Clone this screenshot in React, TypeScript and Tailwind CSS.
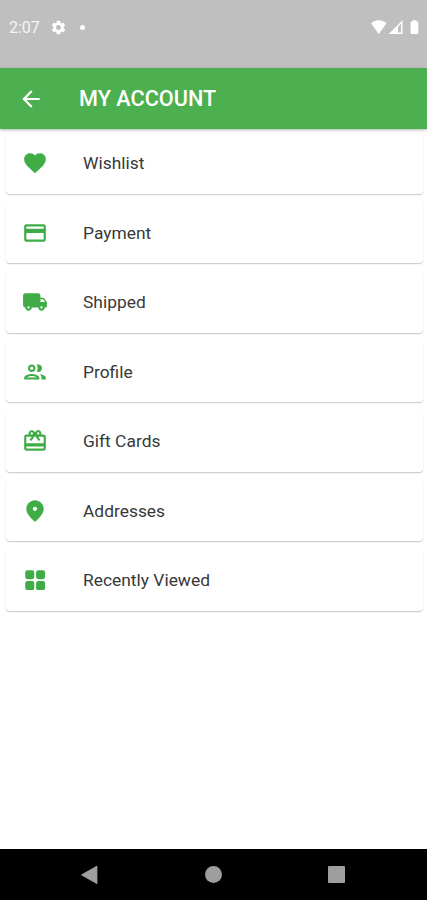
import type { ReactNode } from 'react';
import {
  MdArrowBack,
  MdCardGiftcard,
  MdFavorite,
  MdOutlinePeople,
  MdPayment,
  MdSettings,
} from 'react-icons/md';

type Item = {
  label: string;
  icon: ReactNode;
};

const items: Item[] = [
  { label: 'Wishlist', icon: <MdFavorite className="size-[26px]" /> },
  { label: 'Payment', icon: <MdPayment className="size-[26px]" /> },
  { label: 'Shipped', icon: <TruckIcon /> },
  { label: 'Profile', icon: <MdOutlinePeople className="size-[26px]" /> },
  { label: 'Gift Cards', icon: <MdCardGiftcard className="size-[26px]" /> },
  { label: 'Addresses', icon: <PinIcon /> },
  { label: 'Recently Viewed', icon: <GridIcon /> },
];

export default function App() {
  return (
    <div className="flex h-[900px] w-[427px] flex-col overflow-hidden bg-white font-[Roboto,sans-serif]">
      <StatusBar />
      <header className="z-10 flex h-[61px] shrink-0 items-center bg-[#4caf50] pl-[18px] text-white shadow-[0_1px_3px_rgba(0,0,0,0.3)]">
        <MdArrowBack className="size-[26px]" />
        <h1 className="ml-[35px] whitespace-nowrap pt-px font-medium text-[21.7px] leading-none">
          MY ACCOUNT
        </h1>
      </header>
      <main className="flex grow flex-col gap-[8.7px] pt-[4px] pr-[4px] pl-[5.5px]">
        {items.map((item) => (
          <MenuCard item={item} key={item.label} />
        ))}
      </main>
      <NavBar />
    </div>
  );
}

function MenuCard({ item }: { item: Item }) {
  return (
    <button className="flex h-[60.8px] shrink-0 items-center rounded-[4px] bg-white pl-[16.5px] text-left shadow-[0_1px_1px_rgba(0,0,0,0.16),0_1px_2px_rgba(0,0,0,0.08)]">
      <span className="text-[#3fac46]">{item.icon}</span>
      <span className="ml-[35px] pt-px text-[#383838] text-[17.4px] leading-none">
        {item.label}
      </span>
    </button>
  );
}

function StatusBar() {
  return (
    <div className="flex h-[68px] shrink-0 items-start bg-[#bfbfbf] pt-[18px] pr-[8px] pl-[9px] text-white">
      <span className="w-[33px] pt-px text-[16px] text-white/85 leading-[18px]">
        2:07
      </span>
      <MdSettings className="mt-px ml-[8px] size-[17px]" />
      <span className="mt-[7px] ml-[13px] size-[5px] rounded-full bg-white" />
      <svg
        className="mt-[2px] ml-auto h-[15px] w-[48px]"
        fill="currentColor"
        viewBox="0 0 48 15"
      >
        <path d="M0 3.2C4.5-.8 11-.8 15.500 3.200L7.750 14Z" />
        <path
          d="M31.500 .3V14H17.700ZM30 3.800 27 7v5.600h3Z"
          fillRule="evenodd"
        />
        <path d="M41.500.2h4v1.200h.9q1 0 1 1V13q0 1-1 1h-5.800q-1 0-1-1V2.400q0-1 1-1h.9Z" />
      </svg>
    </div>
  );
}

function NavBar() {
  return (
    <nav className="flex h-[51px] shrink-0 items-center justify-between bg-black pr-[82px] pl-[81px] text-[#9e9e9e]">
      <svg className="h-[20px] w-[17px]" fill="currentColor" viewBox="0 0 17 20">
        <path d="M.8 9.300 15.400.9q1-.5 1 .6v16.800q0 1-1 .5L.8 10.600q-.9-.6 0-1.300Z" />
      </svg>
      <span className="size-[17px] rounded-full bg-[#9e9e9e]" />
      <span className="size-[17px] rounded-[1px] bg-[#9e9e9e]" />
    </nav>
  );
}

function TruckIcon() {
  return (
    <svg className="size-[26px]" fill="currentColor" viewBox="0 0 24 24">
      <path d="M19.500 8H17V6c0-1.100-.9-2-2-2H3c-1.100 0-2 .9-2 2v9c0 1.100.9 2 2 2 0 1.660 1.340 3 3 3s3-1.340 3-3h6c0 1.660 1.340 3 3 3s3-1.340 3-3h1c.55 0 1-.45 1-1v-3.330c0-.43-.14-.85-.4-1.200L20.300 8.400c-.19-.25-.49-.4-.8-.4zM6 18c-.55 0-1-.45-1-1s.45-1 1-1 1 .45 1 1-.45 1-1 1zm13.500-8.500 1.960 2.500H17V9.500h2.500zM18 18c-.55 0-1-.45-1-1s.45-1 1-1 1 .45 1 1-.45 1-1 1z" />
    </svg>
  );
}

function PinIcon() {
  return (
    <svg className="size-[26px]" fill="currentColor" viewBox="0 0 24 24">
      <path d="M12 2c-4.200 0-8 3.220-8 8.200 0 3.180 2.450 6.920 7.340 11.230.38.330.95.330 1.330 0C17.550 17.120 20 13.380 20 10.200 20 5.220 16.200 2 12 2zm0 10c-1.100 0-2-.9-2-2s.9-2 2-2 2 .9 2 2-.9 2-2 2z" />
    </svg>
  );
}

function GridIcon() {
  return (
    <svg className="size-[26px]" fill="currentColor" viewBox="0 0 24 24">
      <rect height="8.300" rx="2" width="8.300" x="3" y="3" />
      <rect height="8.300" rx="2" width="8.300" x="13" y="3" />
      <rect height="8.300" rx="2" width="8.300" x="3" y="13" />
      <rect height="8.300" rx="2" width="8.300" x="13" y="13" />
    </svg>
  );
}
